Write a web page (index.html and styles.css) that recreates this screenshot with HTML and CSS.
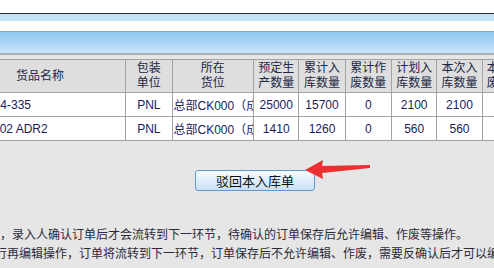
FILE: index.html
```html
<!DOCTYPE html>
<html lang="zh-CN">
<head>
  <meta charset="UTF-8">
  <title>入库单</title>
  <link rel="stylesheet" href="styles.css">
</head>
<body>
  <div class="topbar">
    <div class="tabline"></div>
    <div class="toolbar"></div>
    <div class="titlebar"></div>
  </div>

  <div class="main">
    <table class="grid">
      <colgroup>
        <col class="c-name">
        <col class="c-unit">
        <col class="c-loc">
        <col class="c-num"><col class="c-num2"><col class="c-num2">
        <col class="c-num"><col class="c-num"><col class="c-num">
      </colgroup>
      <thead>
        <tr>
          <th>货品名称</th>
          <th>包装<br>单位</th>
          <th>所在<br>货位</th>
          <th>预定生<br>产数量</th>
          <th>累计入<br>库数量</th>
          <th>累计作<br>废数量</th>
          <th>计划入<br>库数量</th>
          <th>本次入<br>库数量</th>
          <th>本次作<br>废数量</th>
        </tr>
      </thead>
      <tbody>
        <tr>
          <td class="name">RF-35-4-335</td>
          <td>PNL</td>
          <td class="loc">总部CK000（成品仓）</td>
          <td>25000</td>
          <td>15700</td>
          <td>0</td>
          <td>2100</td>
          <td>2100</td>
          <td></td>
        </tr>
        <tr>
          <td class="name">TLX-8-02 ADR2</td>
          <td>PNL</td>
          <td class="loc">总部CK000（成品仓）</td>
          <td>1410</td>
          <td>1260</td>
          <td>0</td>
          <td>560</td>
          <td>560</td>
          <td></td>
        </tr>
      </tbody>
    </table>

    <div class="actions">
      <button type="button" class="btn">驳回本入库单</button>
    </div>

    <div class="notes">
      <div class="note">注：订单保存后，录入人确认订单后才会流转到下一环节，待确认的订单保存后允许编辑、作废等操作。</div>
      <div class="note second">确认后不能进行再编辑操作，订单将流转到下一环节，订单保存后不允许编辑、作废，需要反确认后才可以编辑。</div>
    </div>
  </div>

  <svg class="arrow" width="80" height="30" viewBox="0 0 80 30">
    <polygon points="3,19 21,9 20,15 68,14 68,17 20,22 21,28" fill="#ec2f2f"/>
  </svg>
</body>
</html>
```

FILE: styles.css
```css
html, body {
  margin: 0;
  padding: 0;
}
body {
  width: 494px;
  height: 268px;
  overflow: hidden;
  background: #e6e6e6;
  font-family: "Liberation Sans", "Noto Sans CJK SC", sans-serif;
  font-size: 12px;
  position: relative;
}
.topbar {
  background: #fff;
  padding-top: 13px;
}
.tabline {
  border-top: 1px solid #2e2e2e;
  height: 7px;
  background: #c3e1f7;
}
.toolbar {
  height: 10px;
  background: #fff;
  border-bottom: 1px solid #7fa8c8;
}
.titlebar {
  height: 21px;
  background: linear-gradient(#8fc6ef, #c8e6fa);
  border-bottom: 2px solid #b0b0b0;
}
.main {
  padding-top: 4px;
}
.grid {
  border-collapse: collapse;
  table-layout: fixed;
  width: 574px;
  margin-left: -46px;
}
.c-name { width: 170px; }
.c-unit { width: 46px; }
.c-loc { width: 81px; }
.c-num { width: 45px; }
.c-num2 { width: 46px; }
.grid th, .grid td {
  border: 1px solid #a3a3a3;
  padding: 0 1px;
  text-align: center;
  white-space: nowrap;
  overflow: hidden;
}
.grid th {
  background: #dedede;
  font-weight: normal;
  color: #1d2745;
  height: 32px;
  line-height: 15px;
  font-size: 12px;
}
.grid td {
  background: #fff;
  color: #1b1b5e;
  height: 23px;
  font-size: 12px;
}
.grid td.name, .grid td.loc {
  text-align: left;
}
.grid td.name {
  padding-left: 8px;
}
.actions {
  padding-top: 29px;
  padding-left: 195px;
}
.btn {
  width: 120px;
  height: 21px;
  padding: 0;
  border: 1px solid #5b9bd5;
  border-radius: 3px;
  background: linear-gradient(#f7fbff, #c9e0f4);
  font-family: "Liberation Sans", "Noto Sans CJK SC", sans-serif;
  font-size: 13px;
  color: #111;
}
.notes {
  margin-top: 35px;
  margin-left: -84px;
  color: #2b2b3b;
  line-height: 19px;
}
.note {
  white-space: nowrap;
}
.note.second {
  padding-left: 7px;
}
.arrow {
  position: absolute;
  left: 302px;
  top: 151px;
}
```
